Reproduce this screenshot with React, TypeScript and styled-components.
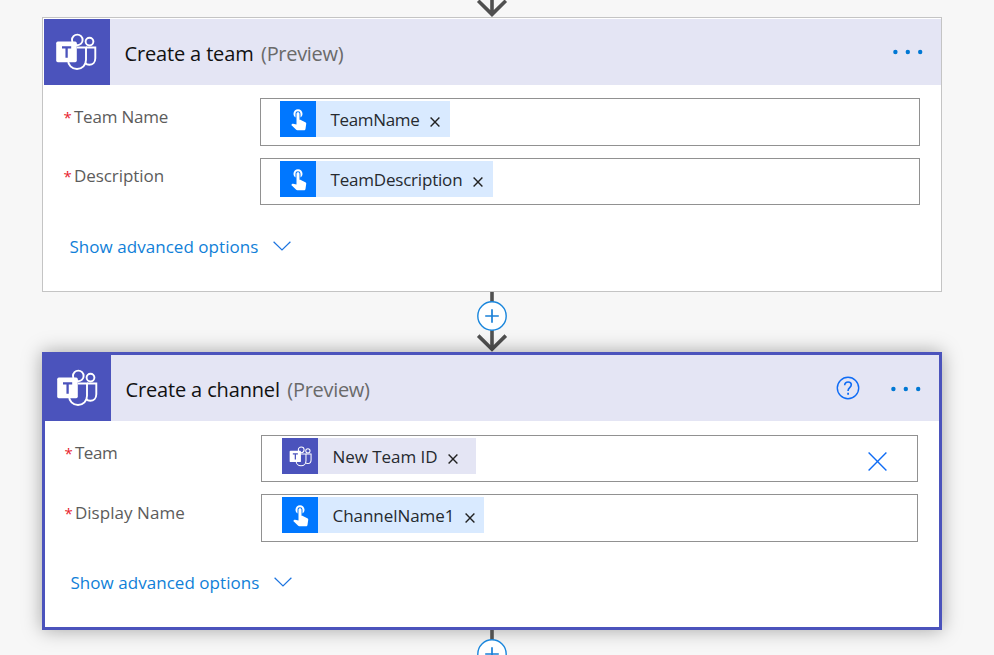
import React from "react";
import styled, { createGlobalStyle } from "styled-components";

const GlobalStyle = createGlobalStyle`
  * { box-sizing: border-box; }
  body {
    margin: 0;
    background: #f7f7f7;
    overflow: hidden;
    font-family: "Open Sans", "Noto Sans", sans-serif;
    font-weight: 400;
  }
  svg { display: block; flex: none; }
`;

const Canvas = styled.main`
  display: flex;
  flex-direction: column;
  align-items: flex-start;
  width: 994px;
  height: 655px;
  padding-left: 42px;
  overflow: hidden;
  background: #f7f7f7;
`;

const Connector = styled.div<{ $height: number }>`
  display: flex;
  justify-content: center;
  width: 900px;
  height: ${(p) => p.$height}px;
  flex: none;
`;

const Card = styled.section<{ $selected?: boolean; $height: number }>`
  flex: none;
  width: 900px;
  height: ${(p) => p.$height}px;
  background: #fff;
  border: ${(p) => (p.$selected ? "3px solid #4b53bc" : "1px solid #c4c4c4")};
  padding: ${(p) => (p.$selected ? "0" : "1px 0 0 1px")};
  box-shadow: ${(p) => (p.$selected ? "0 0 18px rgba(0, 0, 0, 0.34)" : "none")};
`;

const Header = styled.header<{ $inset: number }>`
  display: flex;
  align-items: center;
  height: 66px;
  padding-right: ${(p) => p.$inset}px;
  background: #e4e5f4;
`;

const Brand = styled.div<{ $size: number }>`
  display: flex;
  align-items: center;
  justify-content: center;
  width: ${(p) => p.$size}px;
  height: ${(p) => p.$size}px;
  flex: none;
  padding-right: 2px;
  background: #4b53bc;
`;

const Title = styled.h2<{ $spacing: number }>`
  display: flex;
  flex: 1;
  margin: 3px 0 0 14.5px;
  font-size: 20px;
  line-height: 28px;
  font-weight: 400;
  letter-spacing: ${(p) => p.$spacing}px;
  color: #111;
  white-space: pre;
`;

const Muted = styled.span`
  margin-left: 7.5px;
  letter-spacing: -0.3px;
  color: #6a6a6a;
`;

const IconButton = styled.button<{ $right?: number; $top?: number }>`
  display: flex;
  padding: 0;
  border: 0;
  background: none;
  margin-right: ${(p) => p.$right ?? 0}px;
  margin-top: ${(p) => p.$top ?? 0}px;
`;

const Body = styled.div<{ $top: number; $left: number; $right: number }>`
  display: flex;
  flex-direction: column;
  gap: 12px;
  padding: ${(p) => p.$top}px ${(p) => p.$right}px 0 ${(p) => p.$left}px;
`;

const Row = styled.div<{ $height: number }>`
  display: grid;
  grid-template-columns: 197px 1fr;
  height: ${(p) => p.$height}px;
`;

const Label = styled.label<{ $top: number; $spacing: number }>`
  display: flex;
  padding-top: ${(p) => p.$top}px;
  padding-left: 0.4px;
  font-size: 17px;
  line-height: 24px;
  letter-spacing: ${(p) => p.$spacing}px;
  color: #5c5c5c;
  white-space: pre;
`;

const Star = styled.span`
  width: 10.5px;
  font-size: 15px;
  letter-spacing: 0;
  color: #e8212e;
`;

const Field = styled.div<{ $inset: number }>`
  display: flex;
  align-items: flex-start;
  justify-content: space-between;
  padding: 2px 30px 0 ${(p) => p.$inset}px;
  border: 1px solid #919191;
  background: #fff;
`;

const TokenBox = styled.span<{ $width: number; $teams?: boolean }>`
  display: flex;
  align-items: center;
  width: ${(p) => p.$width}px;
  height: 36px;
  background: ${(p) => (p.$teams ? "#e4e5f4" : "#d9eaff")};
`;

const TokenIcon = styled.span<{ $teams?: boolean }>`
  display: flex;
  align-items: center;
  justify-content: center;
  width: 36px;
  height: 36px;
  flex: none;
  background: ${(p) => (p.$teams ? "#4b53bc" : "#0077ff")};
`;

const TokenText = styled.span<{ $spacing: number }>`
  flex: 1;
  margin-top: 2px;
  padding-left: 14.5px;
  font-size: 17px;
  line-height: 36px;
  letter-spacing: ${(p) => p.$spacing}px;
  color: #262a30;
  white-space: pre;
`;

const TokenRemove = styled.span<{ $right: number }>`
  display: flex;
  margin: 6px ${(p) => p.$right}px 0 0;
`;

const Advanced = styled.a<{ $top: number }>`
  display: flex;
  align-items: center;
  justify-content: space-between;
  width: 221px;
  margin: ${(p) => p.$top}px 0 0 6.5px;
  font-size: 17px;
  line-height: 24px;
  letter-spacing: 0.04px;
  color: #1080d8;

  svg { margin-bottom: 2px; }
`;

const TeamsIcon = ({ size }: { size: number }) => (
  <svg width={size} height={size} viewBox="0 0 42 42" fill="none" stroke="#fff" strokeWidth="1.9">
    <circle cx="22.3" cy="8.9" r="5.3" />
    <circle cx="34.5" cy="10.6" r="3.9" />
    <path d="M22 16.5h9v12.2c0 5.3-3.8 9.3-9 9.3s-9-4-9-9.3V27" />
    <path d="M31 16.5h9.3v10.7c0 4-2.7 6.6-6 6.6-1.7 0-3.2-.7-4.2-1.9" />
    <rect x="1.2" y="10.6" width="20.6" height="20.6" rx="1.6" fill="#fff" stroke="none" />
    <path d="M7 16.3h9.2M11.6 16.3v10.4" stroke="#4b53bc" strokeWidth="2.3" />
  </svg>
);

const TapIcon = () => (
  <svg width="24" height="24" viewBox="-0.5 0.7 24 24" fill="#fff">
    <path d="M9 11.24V7.5a2.5 2.5 0 0 1 5 0v3.74c1.21-.81 2-2.18 2-3.74C16 5.01 13.99 3 11.5 3S7 5.01 7 7.5c0 1.56.79 2.93 2 3.74zm9.84 4.63-4.54-2.26c-.17-.07-.35-.11-.54-.11H13v-6c0-.83-.67-1.5-1.5-1.5S10 6.67 10 7.5v10.74l-3.43-.72c-.08-.01-.15-.03-.24-.03-.31 0-.59.13-.79.33l-.79.8 4.94 4.94c.27.27.65.44 1.06.44h6.79c.75 0 1.33-.55 1.44-1.28l.75-5.27c.01-.07.02-.14.02-.2 0-.62-.38-1.16-.91-1.38z" />
  </svg>
);

const Cross = ({ size, color, weight }: { size: number; color: string; weight: number }) => (
  <svg width={size} height={size} viewBox={`0 0 ${size} ${size}`} stroke={color} strokeWidth={weight}>
    <path d={`M.6.6 ${size - 0.6} ${size - 0.6}M${size - 0.6}.6.6 ${size - 0.6}`} />
  </svg>
);

const Dots = () => (
  <svg width="30" height="6" viewBox="0 0 30 6" fill="#0078d4">
    <circle cx="2.4" cy="3" r="2.2" />
    <circle cx="14.8" cy="3" r="2.2" />
    <circle cx="27.2" cy="3" r="2.2" />
  </svg>
);

const HelpIcon = () => (
  <svg width="24" height="24" viewBox="0 0 24 24" fill="none" stroke="#0f6cf5" strokeWidth="1.4">
    <circle cx="12" cy="12" r="10.7" />
    <path d="M8.7 9.2c0-1.9 1.4-3.2 3.4-3.2 1.9 0 3.2 1.1 3.2 2.8 0 2.7-3.2 2.9-3.2 5.6v.6" strokeWidth="1.6" />
    <path d="M12.1 16.8v1.9" strokeWidth="1.8" />
  </svg>
);

const Chevron = () => (
  <svg width="18" height="10" viewBox="0 0 18 10" fill="none" stroke="#1c74e0" strokeWidth="1.2">
    <path d="m.6.8 8.4 8.2L17.4.8" />
  </svg>
);

const ArrowEnd = () => (
  <svg width="32" height="17" viewBox="0 0 32 17" fill="none" stroke="#505050" strokeWidth="3.6">
    <path d="M16 0v14M2.2.8 16 14.4 29.8.8" />
  </svg>
);

const InsertArrow = () => (
  <svg width="32" height="60" viewBox="0 0 32 60" fill="none">
    <path d="M16 0v56M2.2 43.6 16 57.2l13.8-13.6" stroke="#505050" strokeWidth="3.6" />
    <circle cx="16" cy="24" r="14.2" fill="#fff" stroke="#1a86dc" strokeWidth="1.4" />
    <path d="M9.2 24h13.6M16 17.2v13.6" stroke="#1a80d8" strokeWidth="1.7" />
  </svg>
);

type TokenProps = { text: string; width: number; spacing: number; right: number; teams?: boolean };

const Token = ({ text, width, spacing, right, teams }: TokenProps) => (
  <TokenBox $width={width} $teams={teams}>
    <TokenIcon $teams={teams}>{teams ? <TeamsIcon size={23} /> : <TapIcon />}</TokenIcon>
    <TokenText $spacing={spacing}>{text}</TokenText>
    <TokenRemove $right={right}>
      <Cross size={10} color="#222" weight={1.4} />
    </TokenRemove>
  </TokenBox>
);

const FieldLabel = ({ text, top, spacing }: { text: string; top: number; spacing: number }) => (
  <Label $top={top} $spacing={spacing}>
    <Star>*</Star>
    {text}
  </Label>
);

export default function App() {
  return (
    <>
      <GlobalStyle />
      <Canvas>
        <Connector $height={17}>
          <ArrowEnd />
        </Connector>
        <Card $height={275}>
          <Header $inset={18}>
            <Brand $size={66}>
              <TeamsIcon size={42} />
            </Brand>
            <Title $spacing={-0.15}>
              Create a team<Muted>(Preview)</Muted>
            </Title>
            <IconButton aria-label="More commands">
              <Dots />
            </IconButton>
          </Header>
          <Body $top={13} $left={19} $right={21}>
            <Row $height={48}>
              <FieldLabel text="Team Name" top={7} spacing={-0.2} />
              <Field $inset={19}>
                <Token text="TeamName" width={170} spacing={-0.35} right={10} />
              </Field>
            </Row>
            <Row $height={47}>
              <FieldLabel text="Description" top={6} spacing={-0.05} />
              <Field $inset={19}>
                <Token text="TeamDescription" width={213} spacing={-0.2} right={10} />
              </Field>
            </Row>
            <Advanced $top={18}>
              Show advanced options
              <Chevron />
            </Advanced>
          </Body>
        </Card>
        <Connector $height={60}>
          <InsertArrow />
        </Connector>
        <Card $selected $height={278}>
          <Header $inset={18}>
            <Brand $size={66}>
              <TeamsIcon size={42} />
            </Brand>
            <Title $spacing={-0.15}>
              Create a channel<Muted>(Preview)</Muted>
            </Title>
            <IconButton aria-label="Help" $right={31} $top={-1}>
              <HelpIcon />
            </IconButton>
            <IconButton aria-label="More commands" $top={2}>
              <Dots />
            </IconButton>
          </Header>
          <Body $top={14} $left={19} $right={21}>
            <Row $height={47}>
              <FieldLabel text="Team" top={6} spacing={-0.4} />
              <Field $inset={20}>
                <Token text="New Team ID" width={194} spacing={-0.05} right={18} teams />
                <IconButton aria-label="Clear" $top={14}>
                  <Cross size={19} color="#0f6cf5" weight={1.4} />
                </IconButton>
              </Field>
            </Row>
            <Row $height={48}>
              <FieldLabel text="Display Name" top={7} spacing={0.05} />
              <Field $inset={20}>
                <Token text="ChannelName1" width={202} spacing={-0.05} right={9} />
              </Field>
            </Row>
            <Advanced $top={17}>
              Show advanced options
              <Chevron />
            </Advanced>
          </Body>
        </Card>
        <Connector $height={60}>
          <InsertArrow />
        </Connector>
      </Canvas>
    </>
  );
}
